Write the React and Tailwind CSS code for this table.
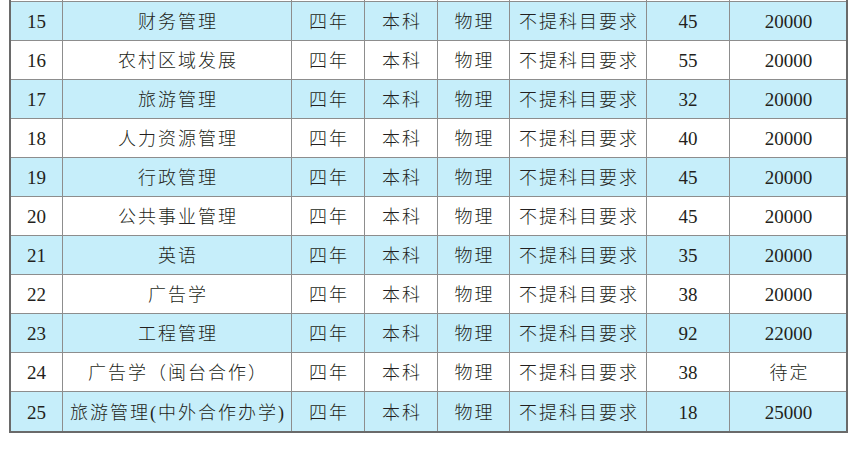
import React from 'react';

const ROWS = [
  ['15', '财务管理', '45', '20000'],
  ['16', '农村区域发展', '55', '20000'],
  ['17', '旅游管理', '32', '20000'],
  ['18', '人力资源管理', '40', '20000'],
  ['19', '行政管理', '45', '20000'],
  ['20', '公共事业管理', '45', '20000'],
  ['21', '英语', '35', '20000'],
  ['22', '广告学', '38', '20000'],
  ['23', '工程管理', '92', '22000'],
  ['24', '广告学（闽台合作）', '38', '待定'],
  ['25', '旅游管理(中外合作办学)', '18', '25000'],
];

const COLS = 'grid grid-cols-[52px_229px_73px_73px_72px_137px_83px_117px]';
const cell = 'flex items-center justify-center pt-[3px] border-r border-[#8d8d8d] last:border-r-0';
const cjk = 'text-[18px] font-light tracking-[2px] pl-[2px]';

export default function App() {
  return (
    <div className="w-[864px] h-[452px] bg-white overflow-hidden pl-[9px] text-[#231f20] font-['Liberation_Serif','Noto_Sans_CJK_SC',serif]">
      <div className="w-[839px] border-x-2 border-b-2 border-[#6a6a6a]">
        {/* top sliver of the row above */}
        <div className={`${COLS} h-[2px] border-b border-[#8d8d8d]`}>
          {Array.from({ length: 8 }).map((_, i) => (
            <div key={i} className="border-r border-[#8d8d8d] last:border-r-0"></div>
          ))}
        </div>
        {ROWS.map((r, i) => (
          <div
            key={r[0]}
            className={`${COLS} h-[39px] ${i < ROWS.length - 1 ? 'border-b border-[#8d8d8d]' : ''} ${i % 2 === 0 ? 'bg-[#c6eefa]' : 'bg-white'}`}
          >
            <div className={`${cell} text-[19px]`}>{r[0]}</div>
            <div className={`${cell} whitespace-nowrap ${cjk}`}>{r[1]}</div>
            <div className={`${cell} ${cjk}`}>四年</div>
            <div className={`${cell} ${cjk}`}>本科</div>
            <div className={`${cell} ${cjk}`}>物理</div>
            <div className={`${cell} ${cjk}`}>不提科目要求</div>
            <div className={`${cell} text-[19px]`}>{r[2]}</div>
            <div className={`${cell} ${r[3] === '待定' ? cjk : 'text-[19px]'}`}>{r[3]}</div>
          </div>
        ))}
      </div>
    </div>
  );
}
